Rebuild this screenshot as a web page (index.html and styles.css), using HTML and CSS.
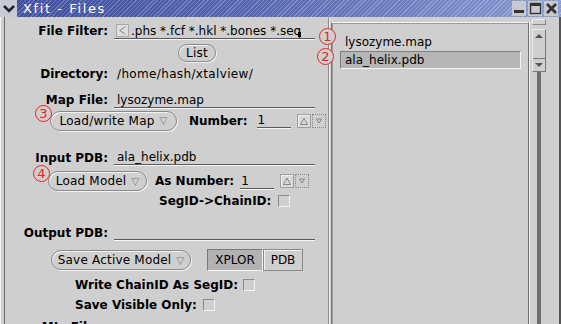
FILE: index.html
```html
<!DOCTYPE html>
<html>
<head>
<meta charset="utf-8">
<link rel="stylesheet" href="styles.css">
</head>
<body>
<div class="win">
  <div class="titlebar">
    <div class="menu-btn">
      <svg width="14" height="12" viewBox="0 0 14 12"><path d="M2 3 L7 8 L12 3" fill="none" stroke="#222" stroke-width="2.6"/></svg>
    </div>
    <div class="title">Xfit - Files</div>
    <div class="tb-btns">
      <div class="tb-btn"><svg width="13" height="13" viewBox="0 0 13 13"><rect x="1" y="8" width="10" height="3" fill="#333"/></svg></div>
      <div class="tb-btn"><svg width="13" height="13" viewBox="0 0 13 13"><rect x="1.5" y="1.5" width="10" height="10" fill="none" stroke="#333" stroke-width="1.4"/><rect x="1" y="1" width="11" height="3" fill="#333"/></svg></div>
      <div class="tb-btn"><svg width="13" height="13" viewBox="0 0 13 13"><path d="M2 2 L11 11 M11 2 L2 11" stroke="#333" stroke-width="2.8"/></svg></div>
    </div>
  </div>
  <div class="frame">
    <div class="left">
      <div class="row r1">
        <span class="label lab-col">File Filter:</span>
        <div class="field ff">
          <span class="arrowbox"><svg width="12" height="11" viewBox="0 0 12 11"><path d="M9 1.5 L3 5.5 L9 9.5" fill="none" stroke="#777" stroke-width="1"/></svg></span>
          <span class="val">.phs *.fcf *.hkl *.bones *.seq</span>
          <span class="cursor"></span>
        </div>
      </div>
      <div class="row r2">
        <span class="pill list-btn">List</span>
      </div>
      <div class="row r3">
        <span class="label lab-col">Directory:</span>
        <span class="val dir">/home/hash/xtalview/</span>
      </div>
      <div class="row r4">
        <span class="label lab-col">Map File:</span>
        <div class="field wide"><span class="val">lysozyme.map</span></div>
      </div>
      <div class="row r5">
        <span class="mark m3">3</span>
        <span class="pill dd b-map">Load/write Map <span class="tri">&#9661;</span></span>
        <span class="label num-lab">Number:</span>
        <div class="field numf"><span class="val">1</span></div>
        <div class="spin">
          <span class="sp up"><svg width="12" height="12" viewBox="0 0 12 12"><path d="M2.5 9.5 L6 3 L9.5 9.5 Z" fill="none" stroke="#888"/></svg></span>
          <span class="sp dn"><svg width="12" height="12" viewBox="0 0 12 12"><path d="M3.5 4 L6 8 L8.5 4 Z" fill="none" stroke="#888"/></svg></span>
        </div>
      </div>
      <div class="row r6">
        <span class="label lab-col">Input PDB:</span>
        <div class="field wide"><span class="val">ala_helix.pdb</span></div>
      </div>
      <div class="row r7">
        <span class="mark m4">4</span>
        <span class="pill dd b-model">Load Model <span class="tri">&#9661;</span></span>
        <span class="label asnum-lab">As Number:</span>
        <div class="field numf"><span class="val">1</span></div>
        <div class="spin">
          <span class="sp up"><svg width="12" height="12" viewBox="0 0 12 12"><path d="M2.5 9.5 L6 3 L9.5 9.5 Z" fill="none" stroke="#888"/></svg></span>
          <span class="sp dn"><svg width="12" height="12" viewBox="0 0 12 12"><path d="M3.5 4 L6 8 L8.5 4 Z" fill="none" stroke="#888"/></svg></span>
        </div>
      </div>
      <div class="row r8">
        <span class="label seg-lab">SegID-&gt;ChainID:</span>
        <span class="check"></span>
      </div>
      <div class="row r9">
        <span class="label lab-col">Output PDB:</span>
        <div class="field wide"><span class="val">&nbsp;</span></div>
      </div>
      <div class="row r10">
        <span class="pill dd b-save">Save Active Model <span class="tri">&#9661;</span></span>
        <div class="toggle">
          <span class="tg on">XPLOR</span>
          <span class="tg">PDB</span>
        </div>
      </div>
      <div class="row r11">
        <span class="label opt-lab">Write ChainID As SegID:</span>
        <span class="check"></span>
      </div>
      <div class="row r12">
        <span class="label opt-lab">Save Visible Only:</span>
        <span class="check"></span>
      </div>
      <div class="row r13">
        <span class="label lab-col">Mtz File:</span>
      </div>
    </div>
    <div class="sep"></div>
    <div class="right">
      <div class="listbox">
        <div class="item">lysozyme.map</div>
        <div class="item sel">ala_helix.pdb</div>
      </div>
      <div class="scroll">
        <div class="sc-top"></div>
        <div class="sc-btns">
          <div class="sc-b"><svg width="12" height="8" viewBox="0 0 12 8"><path d="M2 6 L6 2 L10 6 Z" fill="#555"/></svg></div>
          <div class="sc-b dnb"><svg width="12" height="8" viewBox="0 0 12 8"><path d="M2 2 L6 6 L10 2 Z" fill="#555"/></svg></div>
        </div>
        <div class="sc-track"></div>
      </div>
    </div>
    <span class="mark m1">1</span>
    <span class="mark m2">2</span>
  </div>
</div>
</body>
</html>
```

FILE: styles.css
```css
html, body {
  margin: 0;
  padding: 0;
  background: #cfcfcf;
}
.win {
  width: 561px;
  height: 324px;
  overflow: hidden;
  display: flex;
  flex-direction: column;
  font-family: "DejaVu Sans", sans-serif;
  font-size: 12px;
  color: #000;
}
.titlebar {
  height: 17px;
  flex: none;
  display: flex;
  align-items: center;
  background:
    repeating-linear-gradient(135deg, rgba(255,255,255,0.22) 0 1px, rgba(255,255,255,0) 1px 3px),
    linear-gradient(90deg, #3c4c9c 0%, #5566b0 45%, #8a98d2 100%);
}
.menu-btn {
  width: 17px;
  height: 17px;
  background: #c8cad6;
  display: flex;
  align-items: center;
  justify-content: center;
}
.title {
  margin-left: 6px;
  color: #fff;
  font-size: 13px;
  letter-spacing: 1.6px;
  line-height: 17px;
  flex: 1;
}
.tb-btns {
  display: flex;
  gap: 2px;
  margin-right: 3px;
}
.tb-btn {
  width: 14px;
  height: 15px;
  background: #c6c8d2;
  display: flex;
  align-items: center;
  justify-content: center;
}
.frame {
  flex: 1;
  display: flex;
  position: relative;
  border-left: 1px solid #f4f4f4;
  box-shadow: inset 3px 0 0 #cfcfcf, inset 4px 0 0 #6a6a6a;
  border-right: 2px solid #555;
}
.left {
  width: 324px;
  padding-left: 3px;
  padding-top: 5px;
  flex: none;
}
.row {
  display: flex;
  align-items: center;
  position: relative;
}
.label {
  font-weight: bold;
  white-space: nowrap;
}
.lab-col {
  width: 104px;
  text-align: right;
  flex: none;
}
.val {
  white-space: nowrap;
}
.dir { letter-spacing: 0.35px; }
.field {
  border-bottom: 1px solid #5a5a5a;
  box-shadow: 0 1px 0 #f6f6f6;
  display: flex;
  align-items: center;
  height: 15px;
}
.r1 { height: 18px; }
.ff {
  margin-left: 6px;
  width: 201px;
  position: relative;
}
.arrowbox {
  width: 13px;
  height: 13px;
  margin-left: 2px;
  margin-right: 2px;
  background: #dedede;
  border: 1px solid #a8a8a8;
  display: flex;
  align-items: center;
  justify-content: center;
  box-sizing: border-box;
}
.cursor {
  position: absolute;
  left: 184px;
  top: 9px;
  width: 3px;
  height: 5px;
  background: #000;
}
.r2 { height: 18px; margin-top: 4px; }
.pill {
  border: 1px solid #8a8a8a;
  border-radius: 10px;
  box-shadow: inset 1px 1px 0 #f2f2f2, 1px 1px 0 #f4f4f4;
  display: flex;
  align-items: center;
  justify-content: center;
  box-sizing: border-box;
  white-space: nowrap;
  letter-spacing: 0.2px;
}
.list-btn {
  margin-left: 174px;
  width: 38px;
  height: 18px;
}
.r3 { height: 16px; margin-top: 4px; }
.dir { margin-left: 9px; }
.r4 { height: 16px; margin-top: 10px; }
.wide {
  margin-left: 6px;
  width: 201px;
  padding-left: 3px;
  box-sizing: border-box;
}
.r5 { height: 21px; margin-top: 2px; }
.dd { height: 20px; }
.tri {
  font-size: 10px;
  color: #777;
  margin-left: 5px;
}
.b-map { margin-left: 46px; width: 127px; }
.num-lab { margin-left: 12px; }
.numf {
  margin-left: 9px;
  width: 34px;
  padding-left: 1px;
  box-sizing: border-box;
}
.spin {
  display: flex;
  margin-left: 6px;
}
.sp {
  width: 14px;
  height: 14px;
  box-sizing: border-box;
  display: flex;
  align-items: center;
  justify-content: center;
}
.sp.up {
  background: #d9d9d9;
  border: 1px solid #a0a0a0;
  box-shadow: inset 1px 1px 0 #efefef;
}
.sp.dn {
  border: 1px dotted #8a8a8a;
  margin-left: 1px;
}
.mark {
  position: absolute;
  width: 15px;
  height: 15px;
  border: 1.2px solid #ee2222;
  border-radius: 50%;
  color: #ee2222;
  font-family: "DejaVu Sans", sans-serif;
  font-size: 13px;
  line-height: 15px;
  text-align: center;
  box-sizing: content-box;
}
.m3 { left: 31px; top: -5px; }
.m4 { left: 29px; top: -6px; }
.m1 { left: 318px; top: 11px; background: #cfcfcf; }
.m2 { left: 316px; top: 31px; background: #cfcfcf; }
.r6 { height: 17px; margin-top: 18px; }
.r7 { height: 20px; margin-top: 5px; }
.b-model { margin-left: 44px; width: 99px; }
.asnum-lab { margin-left: 8px; }
.r7 .numf { margin-left: 6px; }
.r8 { height: 15px; margin-top: 2px; }
.seg-lab { margin-left: 155px; }
.check {
  width: 12px;
  height: 12px;
  box-sizing: border-box;
  border-top: 1px solid #8a8a8a;
  border-left: 1px solid #8a8a8a;
  border-bottom: 1px solid #f2f2f2;
  border-right: 1px solid #f2f2f2;
  margin-left: 7px;
  flex: none;
}
.r9 { height: 17px; margin-top: 16px; }
.r10 { height: 22px; margin-top: 8px; }
.b-save { margin-left: 47px; width: 140px; }
.toggle {
  display: flex;
  margin-left: 16px;
}
.tg {
  height: 22px;
  box-sizing: border-box;
  display: flex;
  align-items: center;
  justify-content: center;
  border: 1px solid #8a8a8a;
  box-shadow: inset 1px 1px 0 #f2f2f2;
}
.tg.on {
  width: 56px;
  background: #b2b2b2;
  border-color: #7a7a7a #f2f2f2 #f2f2f2 #7a7a7a;
  box-shadow: none;
}
.tg:not(.on) { width: 40px; }
.r11 { height: 14px; margin-top: 7px; }
.opt-lab { margin-left: 71px; }
.r11 .check { margin-left: 5px; }
.r12 { height: 14px; margin-top: 6px; }
.r12 .check { margin-left: 6px; }
.r13 { height: 14px; margin-top: 8px; }
.r13 .lab-col { width: 96px; }
.sep {
  flex: none;
  border-left: 1px solid #8a8a8a;
  background: #f2f2f2;
  width: 1px;
}
.right {
  flex: 1;
  display: flex;
  padding-top: 5px;
}
.listbox {
  width: 198px;
  box-sizing: border-box;
  border-top: 1px solid #f6f6f6;
  border-left: 1px solid #7a7a7a;
  border-right: 1px solid #6e6e6e;
  box-shadow: inset 1px 1px 0 #9a9a9a;
  padding: 10px 7px 0 8px;
  margin-left: 1px;
}
.item {
  height: 18px;
  line-height: 18px;
  padding-left: 5px;
  box-sizing: border-box;
}
.sel {
  background: #b6b6b6;
  border-top: 1px solid #7e7e7e;
  border-left: 1px solid #7e7e7e;
  border-bottom: 1px solid #f2f2f2;
  border-right: 1px solid #f2f2f2;
  padding-left: 4px;
  line-height: 16px;
}
.scroll {
  width: 26px;
  border-left: 1px solid #f4f4f4;
  position: relative;
  display: flex;
  flex-direction: column;
  align-items: flex-start;
  padding-left: 2px;
  box-sizing: border-box;
}
.sc-top {
  width: 14px;
  height: 6px;
  border: 1px solid #888;
  border-top-color: #eee;
  border-left-color: #eee;
  margin-top: -3px;
  box-sizing: border-box;
}
.sc-btns {
  margin-top: 4px;
  width: 14px;
  border: 1px solid #777;
  border-top-color: #eee;
  border-left-color: #eee;
  box-sizing: border-box;
}
.sc-b {
  height: 15px;
  display: flex;
  align-items: flex-start;
  justify-content: center;
  padding-top: 2px;
  box-sizing: border-box;
}
.sc-b.dnb {
  border-top: 1px solid #777;
  height: 13px;
  margin-top: 13px;
}
.sc-track {
  width: 4px;
  flex: 1;
  background: #6e6e6e;
  margin-left: 5px;
}
```
